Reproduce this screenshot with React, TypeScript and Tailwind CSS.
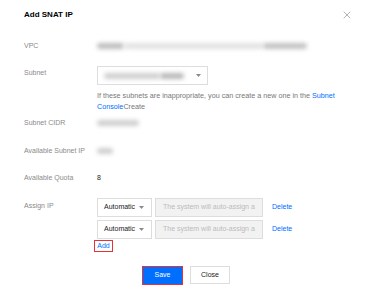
import { X } from 'lucide-react';

function Blur({ w, tone = 'bg-[#c4c4c4]' }: { w: number; tone?: string }) {
  return <span className={`inline-block h-[6px] rounded-full blur-[2px] ${tone}`} style={{ width: w }} />;
}

function Arrow() {
  return (
    <svg width="5" height="3" viewBox="0 0 5 3" className="shrink-0">
      <path d="M0 0h5L2.5 3z" fill="#8a8a8a" />
    </svg>
  );
}

function Label({ children, className = '' }: { children: React.ReactNode; className?: string }) {
  return <div className={`w-[73px] shrink-0 text-[7px] leading-[12px] text-[#8a8a8a] ${className}`}>{children}</div>;
}

function IpRow() {
  return (
    <div className="flex h-[19px] items-center">
      <div className="flex h-full w-[55px] items-center justify-between border border-[#ddd] bg-white pl-[6px] pr-[7px] text-[7px] text-[#222]">
        <span>Automatic</span>
        <Arrow />
      </div>
      <div className="ml-[3px] flex h-full w-[108px] items-center overflow-hidden whitespace-nowrap border border-[#ddd] bg-[#f2f2f2] pl-[7px] text-[7px] text-[#bbb]">
        The system will auto-assign a
      </div>
      <a className="ml-[9px] text-[7px] text-[#006eff]">Delete</a>
    </div>
  );
}

export default function App() {
  return (
    <div
      className="relative h-[301px] w-[370px] overflow-hidden bg-white"
      style={{ fontFamily: '"Liberation Sans", Arial, sans-serif' }}
    >
      <div className="flex items-start justify-between pl-[24px] pr-[17px] pt-[9px]">
        <h1 className="text-[8px] font-bold leading-[12px] text-[#000]">Add SNAT IP</h1>
        <X size={12} strokeWidth={1.3} className="mt-[0px] text-[#888]" />
      </div>

      <div className="flex flex-col pl-[24px]">
        <div className="mt-[19px] flex h-[12px] items-center">
          <Label>VPC</Label>
          <div className="flex items-center">
            <Blur w={27} tone="bg-[#bdbdbd]" />
            <Blur w={139} tone="bg-[#e2e2e2]" />
            <Blur w={44} tone="bg-[#c2c2c2]" />
          </div>
        </div>

        <div className="mt-[14px] flex items-start">
          <Label className="pt-[1px]">Subnet</Label>
          <div className="flex h-[19px] w-[111px] items-center justify-between border border-[#ddd] bg-white pl-[6px] pr-[6px]">
            <div className="flex items-center">
              <Blur w={56} tone="bg-[#cfcfcf]" />
              <Blur w={24} tone="bg-[#b8b8b8]" />
            </div>
            <Arrow />
          </div>
        </div>

        <div className="ml-[73px] mt-[5px] text-[7.2px] leading-[11px] text-[#777]">
          If these subnets are inappropriate, you can create a new one in the{' '}
          <a className="text-[#006eff]">Subnet</a>
          <br />
          <a className="text-[#006eff]">Console</a>Create
        </div>

        <div className="mt-[5px] flex h-[12px] items-center">
          <Label>Subnet CIDR</Label>
          <Blur w={42} tone="bg-[#cfcfcf]" />
        </div>

        <div className="mt-[16px] flex h-[12px] items-center">
          <Label>Available Subnet IP</Label>
          <Blur w={16} tone="bg-[#cfcfcf]" />
        </div>

        <div className="mt-[15px] flex h-[12px] items-center">
          <Label>Available Quota</Label>
          <span className="text-[7px] text-[#222]">8</span>
        </div>

        <div className="mt-[14px] flex items-start">
          <Label className="pt-[2px]">Assign IP</Label>
          <div className="flex flex-col gap-[3px]">
            <IpRow />
            <IpRow />
            <div className="-ml-[3px] -mt-[2px] flex h-[12px] w-[19px] items-center justify-center border border-[#e5323a] text-[7px] text-[#006eff]">
              Add
            </div>
          </div>
        </div>
      </div>

      <div className="mt-[14px] flex justify-center gap-[7px] pl-[2px]">
        <button className="h-[19px] w-[41px] border-[1.5px] border-[#e5323a] bg-[#006eff] text-[7px] text-white">
          Save
        </button>
        <button className="h-[18px] w-[40px] border border-[#ddd] bg-white text-[7px] text-[#222]">Close</button>
      </div>
    </div>
  );
}
